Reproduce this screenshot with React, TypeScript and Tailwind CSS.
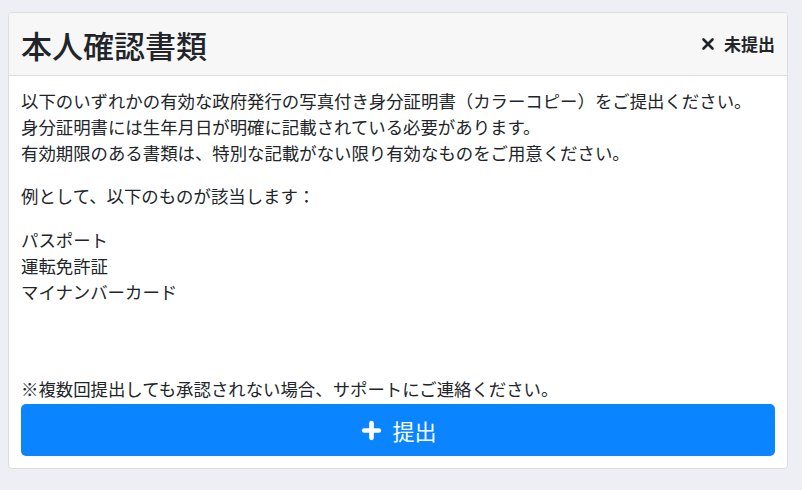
import { Plus, X } from "lucide-react";

const FONT = { fontFamily: '"Noto Sans CJK JP", "Noto Sans", sans-serif' };

export default function App() {
  return (
    <div className="min-h-screen bg-[#edeff5] px-[8px] pt-[12px] pb-[21px] text-[#212529]" style={FONT}>
      <div className="mr-[6px] flex h-[457px] flex-col overflow-hidden rounded-[4px] border border-[#dcdde0] bg-white">
        <div className="flex h-[63px] items-center justify-between border-b border-[#dcdde0] bg-[#f7f7f7] pl-[12px] pr-[12px]">
          <h1 className="text-[31px] font-medium leading-none">本人確認書類</h1>
          <span className="flex items-center gap-[7px] text-[17px] font-bold">
            <X size={18} strokeWidth={3.5} />
            未提出
          </span>
        </div>
        <div className="flex flex-1 flex-col px-[12px] pt-[12px] pb-[12px] text-[17.4px] leading-[26px]">
          <p>
            以下のいずれかの有効な政府発行の写真付き身分証明書（カラーコピー）をご提出ください。
            <br />
            身分証明書には生年月日が明確に記載されている必要があります。
            <br />
            有効期限のある書類は、特別な記載がない限り有効なものをご用意ください。
          </p>
          <p className="mt-[17px]">例として、以下のものが該当します：</p>
          <ul className="mt-[18px]">
            <li>パスポート</li>
            <li>運転免許証</li>
            <li>マイナンバーカード</li>
          </ul>
          <p className="mt-auto">※複数回提出しても承認されない場合、サポートにご連絡ください。</p>
          <button className="mt-[2px] flex h-[52px] w-full items-center justify-center gap-[8px] rounded-[5px] bg-[#0a84ff] text-[22px] text-white">
            <Plus size={25} strokeWidth={4.5} />
            提出
          </button>
        </div>
      </div>
    </div>
  );
}
